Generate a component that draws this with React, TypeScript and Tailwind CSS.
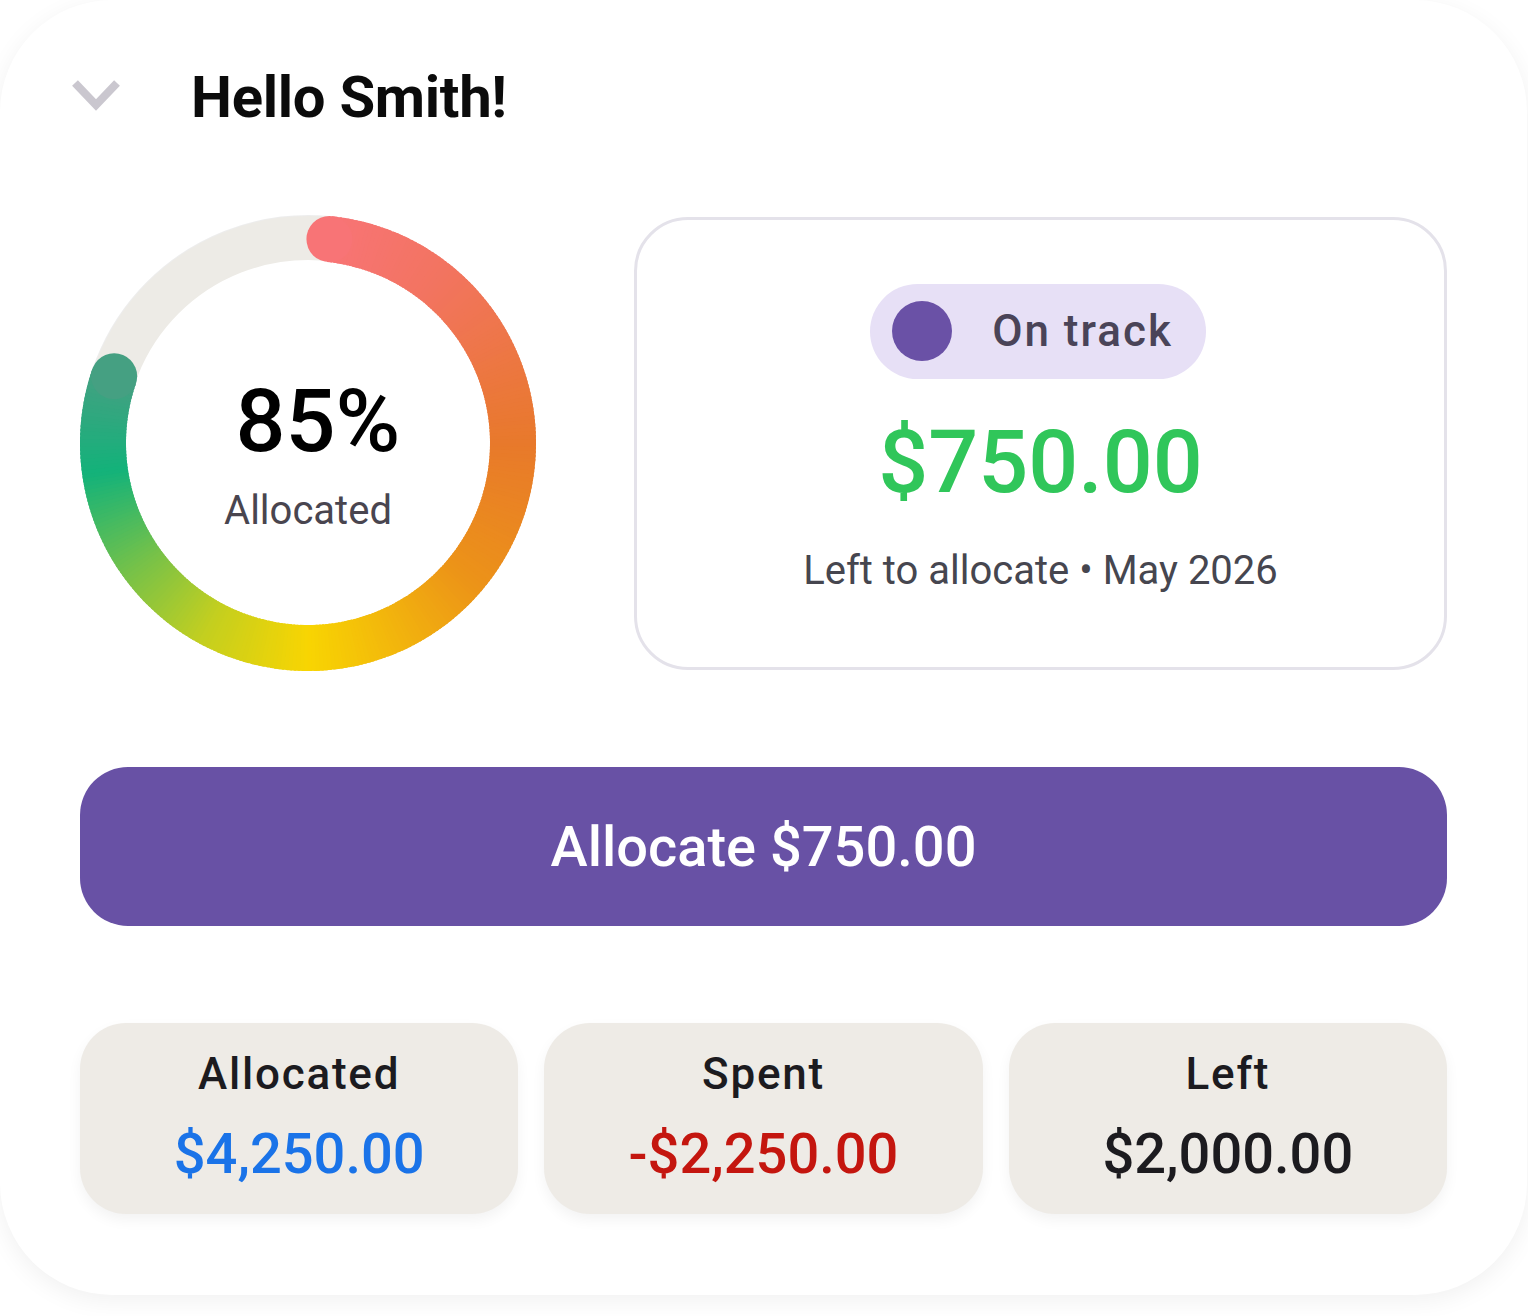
import React from "react";

type Stop = [number, string];

// colour stops along the progress arc, in degrees clockwise from 12 o'clock
const arcStops: Stop[] = [
  [6, "#f87476"],
  [40, "#f2745f"],
  [90, "#e8792b"],
  [130, "#ec9318"],
  [180, "#f8d502"],
  [208, "#c4cf1f"],
  [235, "#73c14a"],
  [262, "#13b27a"],
  [289, "#45a082"],
];

const hexToRgb = (hex: string) => [1, 3, 5].map((i) => parseInt(hex.slice(i, i + 2), 16));

const colorAt = (deg: number) => {
  for (let i = 0; i < arcStops.length - 1; i++) {
    const [a0, c0] = arcStops[i];
    const [a1, c1] = arcStops[i + 1];
    if (deg >= a0 && deg <= a1) {
      const t = (deg - a0) / (a1 - a0);
      const p = hexToRgb(c0);
      const q = hexToRgb(c1);
      const mix = p.map((v, k) => Math.round(v + (q[k] - v) * t));
      return `rgb(${mix[0]},${mix[1]},${mix[2]})`;
    }
  }
  return deg < arcStops[0][0] ? arcStops[0][1] : arcStops[arcStops.length - 1][1];
};

const SIZE = 456;
const C = SIZE / 2;
const R = 205;
const STROKE = 46;

const pointAt = (deg: number) => {
  const rad = (deg * Math.PI) / 180;
  return [C + R * Math.sin(rad), C - R * Math.cos(rad)];
};

const AllocationRing = () => {
  const start = 6;
  const end = 289;
  const segments: JSX.Element[] = [];
  for (let a = start; a < end; a += 1) {
    const b = Math.min(a + 1.6, end);
    const [x0, y0] = pointAt(a);
    const [x1, y1] = pointAt(b);
    segments.push(
      <path
        key={a}
        d={`M ${x0} ${y0} A ${R} ${R} 0 0 1 ${x1} ${y1}`}
        stroke={colorAt(a + 0.5)}
        strokeWidth={STROKE}
        fill="none"
      />
    );
  }
  const [sx, sy] = pointAt(start);
  const [ex, ey] = pointAt(end);

  return (
    <div className="relative h-[456px] w-[456px] shrink-0">
      <svg width={SIZE} height={SIZE} viewBox={`0 0 ${SIZE} ${SIZE}`} className="absolute inset-0">
        <circle cx={C} cy={C} r={226} stroke="rgba(0,0,0,0.07)" strokeWidth={4} fill="none" />
        <circle cx={C} cy={C} r={R} stroke="#edebe6" strokeWidth={STROKE - 2} fill="none" />
        {segments}
        <circle cx={sx} cy={sy} r={STROKE / 2} fill={colorAt(start)} />
        <circle cx={ex} cy={ey} r={STROKE / 2} fill={colorAt(end)} />
      </svg>
      <div className="relative flex h-full flex-col items-center justify-center pt-[22px]">
        <p className="ml-[20px] text-[88px] font-medium leading-none text-black">85%</p>
        <p className="mt-[26px] text-[40px] leading-none text-[#49454f]">Allocated</p>
      </div>
    </div>
  );
};

const stats = [
  { label: "Allocated", value: "$4,250.00", color: "text-[#1a73e8]" },
  { label: "Spent", value: "-$2,250.00", color: "text-[#c4160f]" },
  { label: "Left", value: "$2,000.00", color: "text-[#1c1b1f]" },
];

export default function App() {
  return (
    <div className="min-h-[1316px] w-[1528px] bg-white font-[Roboto,sans-serif]">
      <div className="flex w-[1527px] flex-col rounded-[112px] bg-white px-[80px] pt-[57px] pb-[81px] shadow-[0_6px_24px_rgba(0,0,0,0.06)]">
        <div className="-ml-[8px] flex h-[80px] items-center gap-[71px]">
          <svg width="48" height="34" viewBox="0 0 48 34" className="mt-[-4px]">
            <polyline points="3,5 24,27 45,5" fill="none" stroke="#cac7cf" strokeWidth="8" strokeLinejoin="miter" />
          </svg>
          <h1 className="text-[58px] font-bold leading-none tracking-[-0.005em] text-[#0b0b0b]">Hello Smith!</h1>
        </div>

        <div className="mt-[78px] flex items-center gap-[98px]">
          <AllocationRing />
          <div className="flex h-[453px] flex-1 flex-col items-center rounded-[54px] border-[3px] border-[#e4e2ea] bg-white pt-[64px]">
            <div className="-ml-[5px] flex h-[95px] items-center rounded-full bg-[#e7e0f6] pl-[22px] pr-[33px]">
              <span className="h-[60px] w-[60px] rounded-full bg-[#6a51a6]" />
              <span className="ml-[40px] text-[44px] font-medium leading-none tracking-[0.045em] text-[#4a4458]">On track</span>
            </div>
            <p className="mt-[39px] text-[88px] font-medium leading-none text-[#30c65a]">$750.00</p>
            <p className="mt-[45px] text-[40px] leading-none text-[#46464f]">Left to allocate • May 2026</p>
          </div>
        </div>

        <button
          type="button"
          className="mt-[96px] flex h-[159px] w-full items-center justify-center rounded-[48px] bg-[#6851a5] text-[56px] font-medium text-white"
        >
          Allocate $750.00
        </button>

        <div className="mt-[97px] grid grid-cols-3 gap-[26px]">
          {stats.map((s) => (
            <div
              key={s.label}
              className="flex h-[191px] flex-col items-center justify-center rounded-[46px] bg-[#eeebe6] pb-[4px] shadow-[0_6px_14px_rgba(0,0,0,0.05)]"
            >
              <p className="text-[44px] font-medium leading-none tracking-[0.04em] text-[#1c1b1f]">{s.label}</p>
              <p className={`mt-[30px] text-[56px] font-medium leading-none ${s.color}`}>{s.value}</p>
            </div>
          ))}
        </div>
      </div>
    </div>
  );
}
